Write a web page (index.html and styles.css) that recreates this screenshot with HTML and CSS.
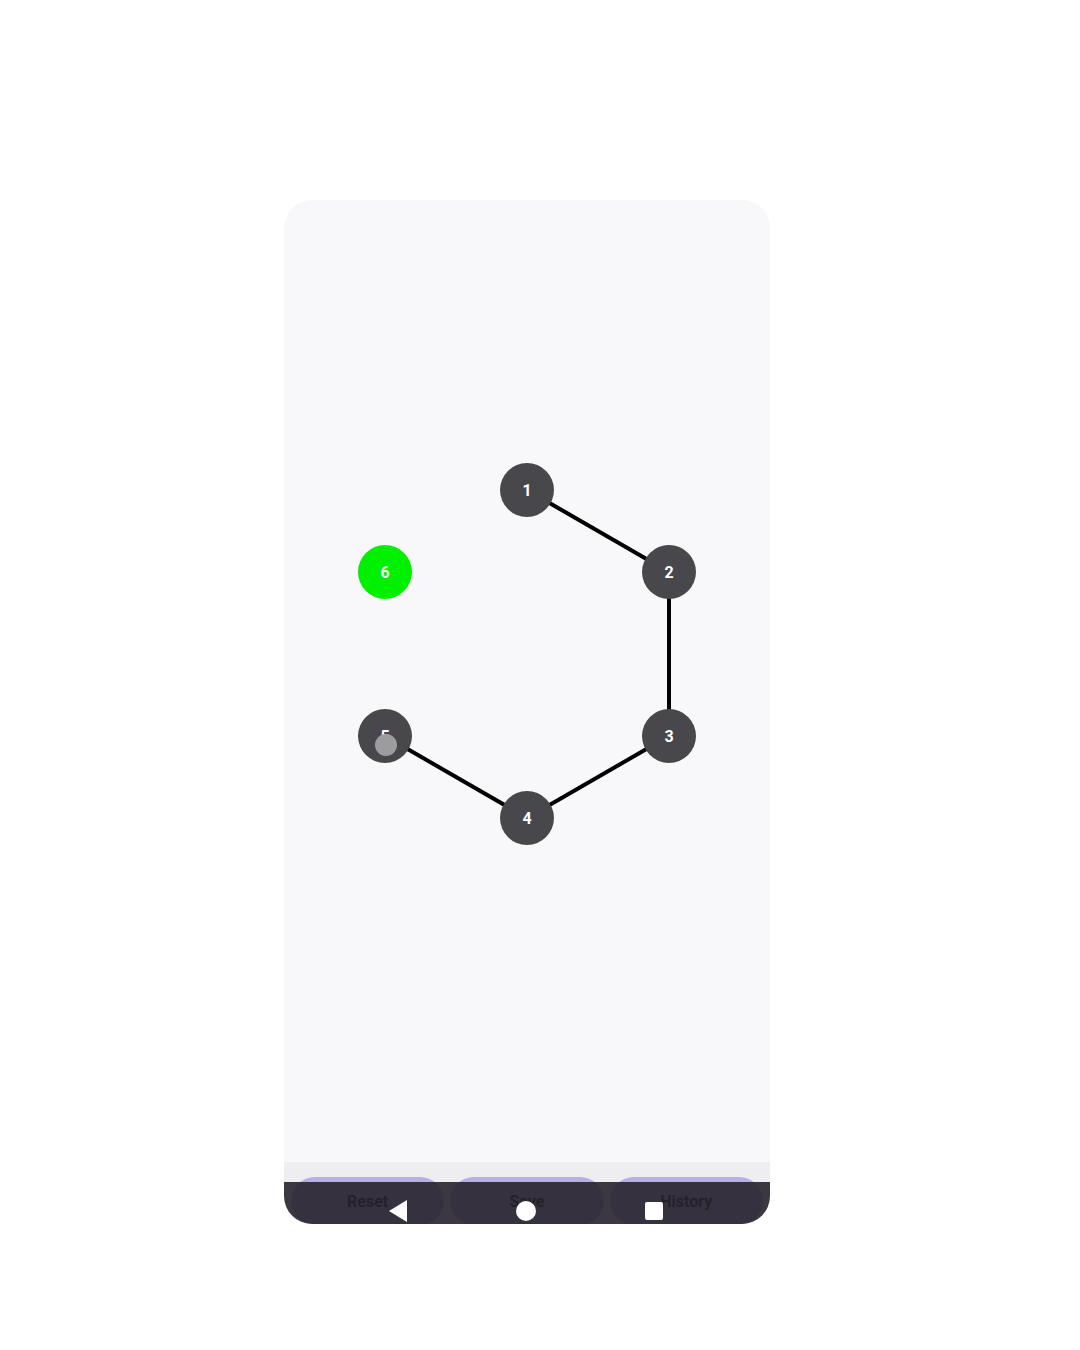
FILE: index.html
```html
<!DOCTYPE html>
<html>
<head>
<meta charset="utf-8">
<link rel="stylesheet" href="styles.css">
</head>
<body>
<div class="stage">
  <div class="phone">
    <div class="canvas">
      <svg class="graph" width="486" height="962" viewBox="0 0 486 962">
        <g class="edges">
          <line x1="243" y1="290" x2="385" y2="372"/>
          <line x1="385" y1="372" x2="385" y2="536"/>
          <line x1="385" y1="536" x2="243" y2="618"/>
          <line x1="243" y1="618" x2="101" y2="536"/>
        </g>
        <g class="node"><circle cx="243" cy="290" r="27"/><text x="243" y="295.5">1</text></g>
        <g class="node"><circle cx="385" cy="372" r="27"/><text x="385" y="377.5">2</text></g>
        <g class="node"><circle cx="385" cy="536" r="27"/><text x="385" y="541.5">3</text></g>
        <g class="node"><circle cx="243" cy="618" r="27"/><text x="243" y="623.5">4</text></g>
        <g class="node"><circle cx="101" cy="536" r="27"/><text x="101" y="541.5">5</text></g>
        <g class="node active"><circle cx="101" cy="372" r="27"/><text x="101" y="377.5">6</text></g>
        <circle class="touch" cx="102" cy="545" r="11"/>
      </svg>
    </div>
    <div class="bottombar">
      <div class="btn">Reset</div>
      <div class="btn">Save</div>
      <div class="btn">History</div>
    </div>
    <div class="navbar">
      <svg class="nav-icon" width="20" height="22" viewBox="0 0 20 22"><polygon points="1,11 19,0 19,22"/></svg>
      <svg class="nav-icon" width="20" height="22" viewBox="0 0 20 22"><circle cx="10" cy="11" r="10"/></svg>
      <svg class="nav-icon" width="20" height="22" viewBox="0 0 20 22"><rect x="1" y="2" width="18" height="18" rx="2"/></svg>
    </div>
  </div>
</div>
</body>
</html>
```
FILE: styles.css
```css
html, body {
  margin: 0;
  padding: 0;
  background: #ffffff;
  font-family: Roboto, "Liberation Sans", sans-serif;
}

.stage {
  padding: 200px 0 0 284px;
  height: 1150px;
}

.phone {
  position: relative;
  width: 486px;
  height: 1024px;
  border-radius: 28px;
  overflow: hidden;
  background: #f8f7fa;
  display: flex;
  flex-direction: column;
}

.canvas {
  flex: 1;
  display: flex;
}

.graph {
  display: block;
}

.edges line {
  stroke: #000000;
  stroke-width: 4;
}

.node circle {
  fill: #48474b;
}

.node text {
  fill: #ffffff;
  font-family: Roboto, "Liberation Sans", sans-serif;
  font-weight: 700;
  font-size: 16px;
  text-anchor: middle;
}

.node.active circle {
  fill: #00f000;
}

.node.active text {
  fill: #f2fff2;
}

.touch {
  fill: #9c9b9e;
}

.bottombar {
  height: 62px;
  box-sizing: border-box;
  background: #eeedf0;
  padding: 15px 7px 0 7px;
  display: flex;
  gap: 6px;
}

.btn {
  flex: 1;
  height: 48px;
  border-radius: 24px;
  background: #b9b0e2;
  color: #000000;
  font-size: 16px;
  font-weight: 700;
  display: flex;
  align-items: center;
  justify-content: center;
}

.navbar {
  position: absolute;
  left: 0;
  right: 0;
  bottom: 0;
  height: 42px;
  background: rgba(40, 35, 46, 0.9);
  display: flex;
  align-items: flex-start;
  padding: 18px 0 0 104px;
  box-sizing: border-box;
  gap: 108px;
}

.nav-icon {
  display: block;
  fill: #ffffff;
}
```
